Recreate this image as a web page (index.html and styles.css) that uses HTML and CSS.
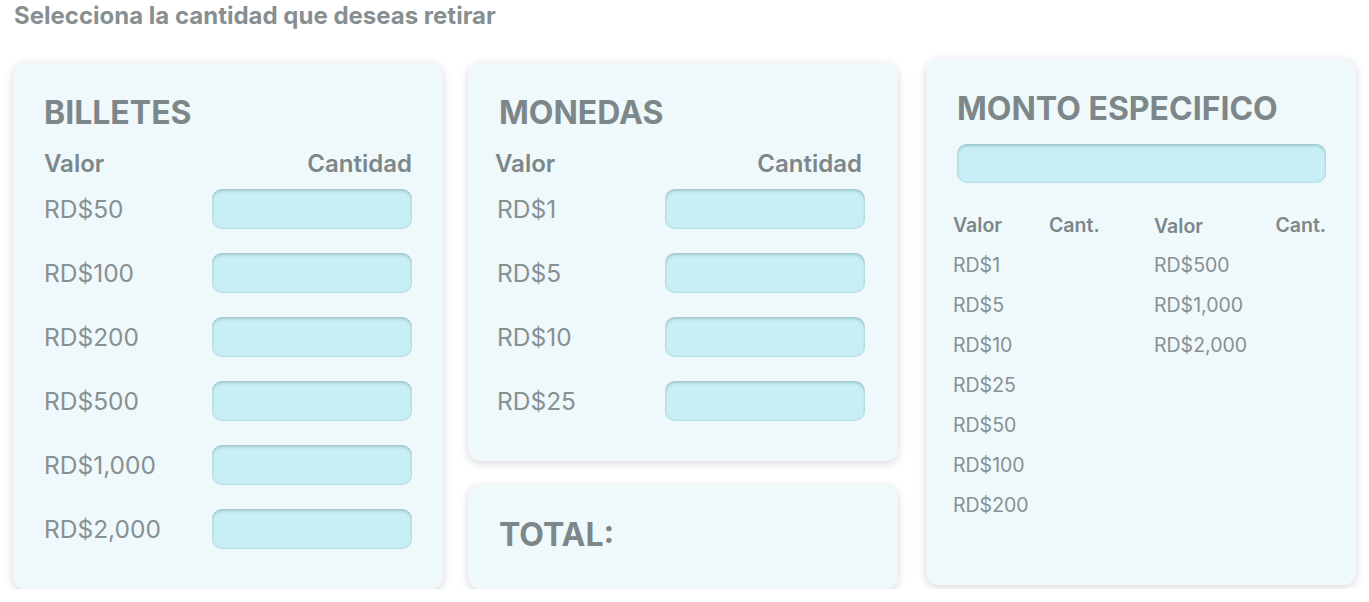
FILE: index.html
```html
<!DOCTYPE html>
<html lang="es">
<head>
<meta charset="utf-8">
<title>Retiro</title>
<link rel="stylesheet" href="styles.css">
</head>
<body>
<div class="page">
  <h1 class="title">Selecciona la cantidad que deseas retirar</h1>
  <div class="columns">
    <section class="card card-bills">
      <h2 class="card-title">BILLETES</h2>
      <div class="table-head"><span>Valor</span><span>Cantidad</span></div>
      <div class="rows">
        <div class="row"><span class="label">RD$50</span><input class="qty" type="text"></div>
        <div class="row"><span class="label">RD$100</span><input class="qty" type="text"></div>
        <div class="row"><span class="label">RD$200</span><input class="qty" type="text"></div>
        <div class="row"><span class="label">RD$500</span><input class="qty" type="text"></div>
        <div class="row"><span class="label">RD$1,000</span><input class="qty" type="text"></div>
        <div class="row"><span class="label">RD$2,000</span><input class="qty" type="text"></div>
      </div>
    </section>
    <div class="middle">
      <section class="card card-coins">
        <h2 class="card-title">MONEDAS</h2>
        <div class="table-head"><span>Valor</span><span>Cantidad</span></div>
        <div class="rows">
          <div class="row"><span class="label">RD$1</span><input class="qty" type="text"></div>
          <div class="row"><span class="label">RD$5</span><input class="qty" type="text"></div>
          <div class="row"><span class="label">RD$10</span><input class="qty" type="text"></div>
          <div class="row"><span class="label">RD$25</span><input class="qty" type="text"></div>
        </div>
      </section>
      <section class="card card-total">
        <h2 class="card-title">TOTAL:</h2>
      </section>
    </div>
    <section class="card card-amount">
      <h2 class="card-title">MONTO ESPECIFICO</h2>
      <input class="amount" type="text">
      <div class="breakdown">
        <div class="group group-left">
          <div class="bd-head"><span class="bd-val">Valor</span><span>Cant.</span></div>
          <div class="bd-item">RD$1</div>
          <div class="bd-item">RD$5</div>
          <div class="bd-item">RD$10</div>
          <div class="bd-item">RD$25</div>
          <div class="bd-item">RD$50</div>
          <div class="bd-item">RD$100</div>
          <div class="bd-item">RD$200</div>
        </div>
        <div class="group group-right">
          <div class="bd-head bd-head-split"><span class="bd-val2">Valor</span><span>Cant.</span></div>
          <div class="bd-item">RD$500</div>
          <div class="bd-item">RD$1,000</div>
          <div class="bd-item">RD$2,000</div>
        </div>
      </div>
    </section>
  </div>
</div>
</body>
</html>
```

FILE: styles.css
```css
* { box-sizing: border-box; }

html, body {
  margin: 0;
  padding: 0;
  background: #ffffff;
  font-family: Inter, "Noto Sans", "Liberation Sans", sans-serif;
}

.page {
  padding: 1px 13px 0 13px;
}

.title {
  margin: 0 0 33px 1px;
  font-size: 24px;
  line-height: 29px;
  font-weight: 700;
  color: #878f91;
}

.columns {
  display: flex;
  align-items: stretch;
  gap: 25px;
}

.card {
  width: 430px;
  background: #eff9fb;
  border-radius: 12px;
  box-shadow: 0 2px 8px rgba(0, 0, 0, 0.16);
  padding: 30px 31px 40px 31px;
}

.card-title {
  margin: 0;
  font-size: 32px;
  line-height: 40px;
  font-weight: 700;
  color: #7d8789;
}

.table-head {
  margin-top: 17px;
  display: flex;
  justify-content: space-between;
  font-size: 24px;
  line-height: 28px;
  font-weight: 600;
  color: #7d8789;
}

.rows {
  margin-top: 11px;
  display: flex;
  flex-direction: column;
  gap: 24px;
}

.row {
  display: flex;
  align-items: center;
  justify-content: space-between;
  height: 40px;
}

.label {
  font-size: 24.5px;
  color: #879092;
}

.qty, .amount {
  display: block;
  border: none;
  outline: none;
  background: #c9eff6;
  border-radius: 10px;
  box-shadow: inset 0 2px 3px rgba(60, 110, 120, 0.32), inset 0 -1px 2px rgba(60, 110, 120, 0.12);
}

.qty {
  width: 200px;
  height: 40px;
}

.middle {
  display: flex;
  flex-direction: column;
  gap: 24px;
}

.card-coins {
  padding-right: 33px;
}

.card-coins .table-head {
  margin-left: -4px;
  padding-right: 3px;
}

.card-coins .label {
  margin-left: -2px;
}

.card-total {
  padding: 30px 31px 34px 31px;
  flex: 1;
}

.card-amount {
  margin-left: 3px;
  margin-top: -4px;
  margin-bottom: 4px;
  padding: 30px 30px 40px 31px;
}

.amount {
  margin-top: 15px;
  width: 100%;
  height: 39px;
}

.breakdown {
  margin-top: 22px;
  margin-left: -4px;
  display: flex;
}

.group-left {
  width: 201px;
}

.group-right {
  flex: 1;
}

.bd-head {
  display: flex;
  font-size: 19.5px;
  line-height: 40px;
  font-weight: 600;
  color: #7d8789;
}

.bd-val {
  width: 96px;
}

.bd-head-split {
  justify-content: space-between;
}

.bd-val2 {
  position: relative;
  top: 1px;
}

.bd-item {
  font-size: 19.5px;
  line-height: 40px;
  color: #879092;
}
```
